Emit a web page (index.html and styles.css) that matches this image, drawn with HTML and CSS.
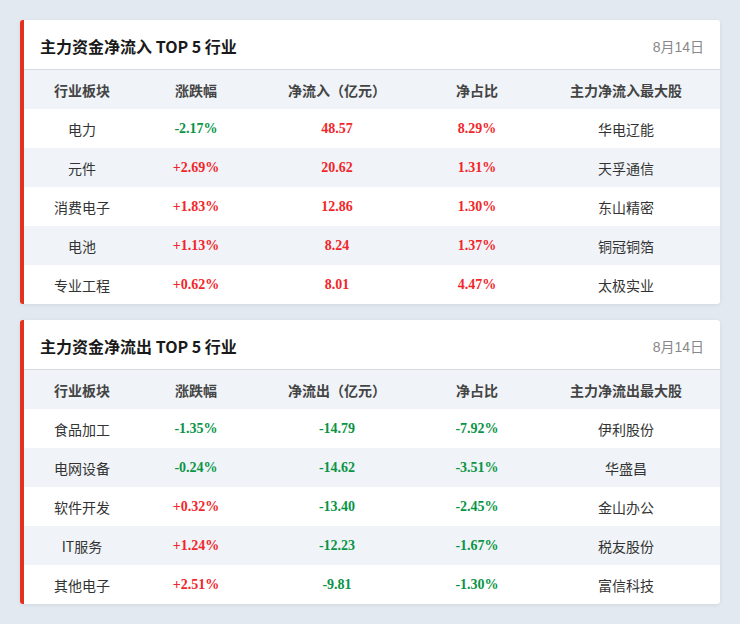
FILE: index.html
```html
<!DOCTYPE html>
<html lang="zh-CN">
<head>
<meta charset="utf-8">
<link rel="stylesheet" href="styles.css">
</head>
<body>
<div class="page">
  <section class="card">
    <div class="card-head">
      <h2 class="title">主力资金净流入 TOP 5 行业</h2>
      <span class="date">8月14日</span>
    </div>
    <div class="row head">
      <div class="c1">行业板块</div><div class="c2">涨跌幅</div><div class="c3">净流入（亿元）</div><div class="c4">净占比</div><div class="c5">主力净流入最大股</div>
    </div>
    <div class="row">
      <div class="c1">电力</div><div class="c2 num dn">-2.17%</div><div class="c3 num up">48.57</div><div class="c4 num up">8.29%</div><div class="c5">华电辽能</div>
    </div>
    <div class="row alt">
      <div class="c1">元件</div><div class="c2 num up">+2.69%</div><div class="c3 num up">20.62</div><div class="c4 num up">1.31%</div><div class="c5">天孚通信</div>
    </div>
    <div class="row">
      <div class="c1">消费电子</div><div class="c2 num up">+1.83%</div><div class="c3 num up">12.86</div><div class="c4 num up">1.30%</div><div class="c5">东山精密</div>
    </div>
    <div class="row alt">
      <div class="c1">电池</div><div class="c2 num up">+1.13%</div><div class="c3 num up">8.24</div><div class="c4 num up">1.37%</div><div class="c5">铜冠铜箔</div>
    </div>
    <div class="row">
      <div class="c1">专业工程</div><div class="c2 num up">+0.62%</div><div class="c3 num up">8.01</div><div class="c4 num up">4.47%</div><div class="c5">太极实业</div>
    </div>
  </section>

  <section class="card">
    <div class="card-head">
      <h2 class="title">主力资金净流出 TOP 5 行业</h2>
      <span class="date">8月14日</span>
    </div>
    <div class="row head">
      <div class="c1">行业板块</div><div class="c2">涨跌幅</div><div class="c3">净流出（亿元）</div><div class="c4">净占比</div><div class="c5">主力净流出最大股</div>
    </div>
    <div class="row">
      <div class="c1">食品加工</div><div class="c2 num dn">-1.35%</div><div class="c3 num dn">-14.79</div><div class="c4 num dn">-7.92%</div><div class="c5">伊利股份</div>
    </div>
    <div class="row alt">
      <div class="c1">电网设备</div><div class="c2 num dn">-0.24%</div><div class="c3 num dn">-14.62</div><div class="c4 num dn">-3.51%</div><div class="c5">华盛昌</div>
    </div>
    <div class="row">
      <div class="c1">软件开发</div><div class="c2 num up">+0.32%</div><div class="c3 num dn">-13.40</div><div class="c4 num dn">-2.45%</div><div class="c5">金山办公</div>
    </div>
    <div class="row alt">
      <div class="c1">IT服务</div><div class="c2 num up">+1.24%</div><div class="c3 num dn">-12.23</div><div class="c4 num dn">-1.67%</div><div class="c5">税友股份</div>
    </div>
    <div class="row">
      <div class="c1">其他电子</div><div class="c2 num up">+2.51%</div><div class="c3 num dn">-9.81</div><div class="c4 num dn">-1.30%</div><div class="c5">富信科技</div>
    </div>
  </section>
</div>
</body>
</html>
```

FILE: styles.css
```css
* { box-sizing: border-box; }
html, body { margin: 0; padding: 0; }
body {
  background: #e3e9f0;
  font-family: "Microsoft YaHei", "Noto Sans CJK SC", "Noto Sans", sans-serif;
  color: #333;
}
.page {
  padding: 20px;
  display: flex;
  flex-direction: column;
  gap: 16px;
}
.card {
  width: 700px;
  background: #fff;
  border-left: 4px solid #e2311f;
  border-radius: 3px;
  box-shadow: 0 1px 4px rgba(0, 0, 0, 0.08);
  overflow: hidden;
}
.card-head {
  height: 50px;
  display: flex;
  align-items: center;
  justify-content: space-between;
  padding: 0 16px;
  border-bottom: 1px solid #d6d9dd;
}
.title {
  margin: 0;
  font-size: 16px;
  font-weight: 700;
  color: #1a1a1a;
  line-height: 20px;
  padding-top: 2px;
}
.date {
  font-size: 14px;
  color: #888;
  font-family: "Liberation Sans", "Noto Sans CJK SC", sans-serif;
  padding-top: 3px;
}
.row {
  display: grid;
  grid-template-columns: 116px 112px 170px 110px 188px;
  height: 39px;
  align-items: center;
  font-size: 14px;
  text-align: center;
  color: #333;
}
.row.head {
  background: #f0f4f8;
  font-weight: 700;
  color: #444;
}
.row.alt { background: #f0f4f8; }
.num {
  font-family: "Liberation Serif", "Times New Roman", serif;
  font-weight: 700;
  font-size: 14px;
}
.up { color: #f2262a; }
.dn { color: #0a9446; }
```
